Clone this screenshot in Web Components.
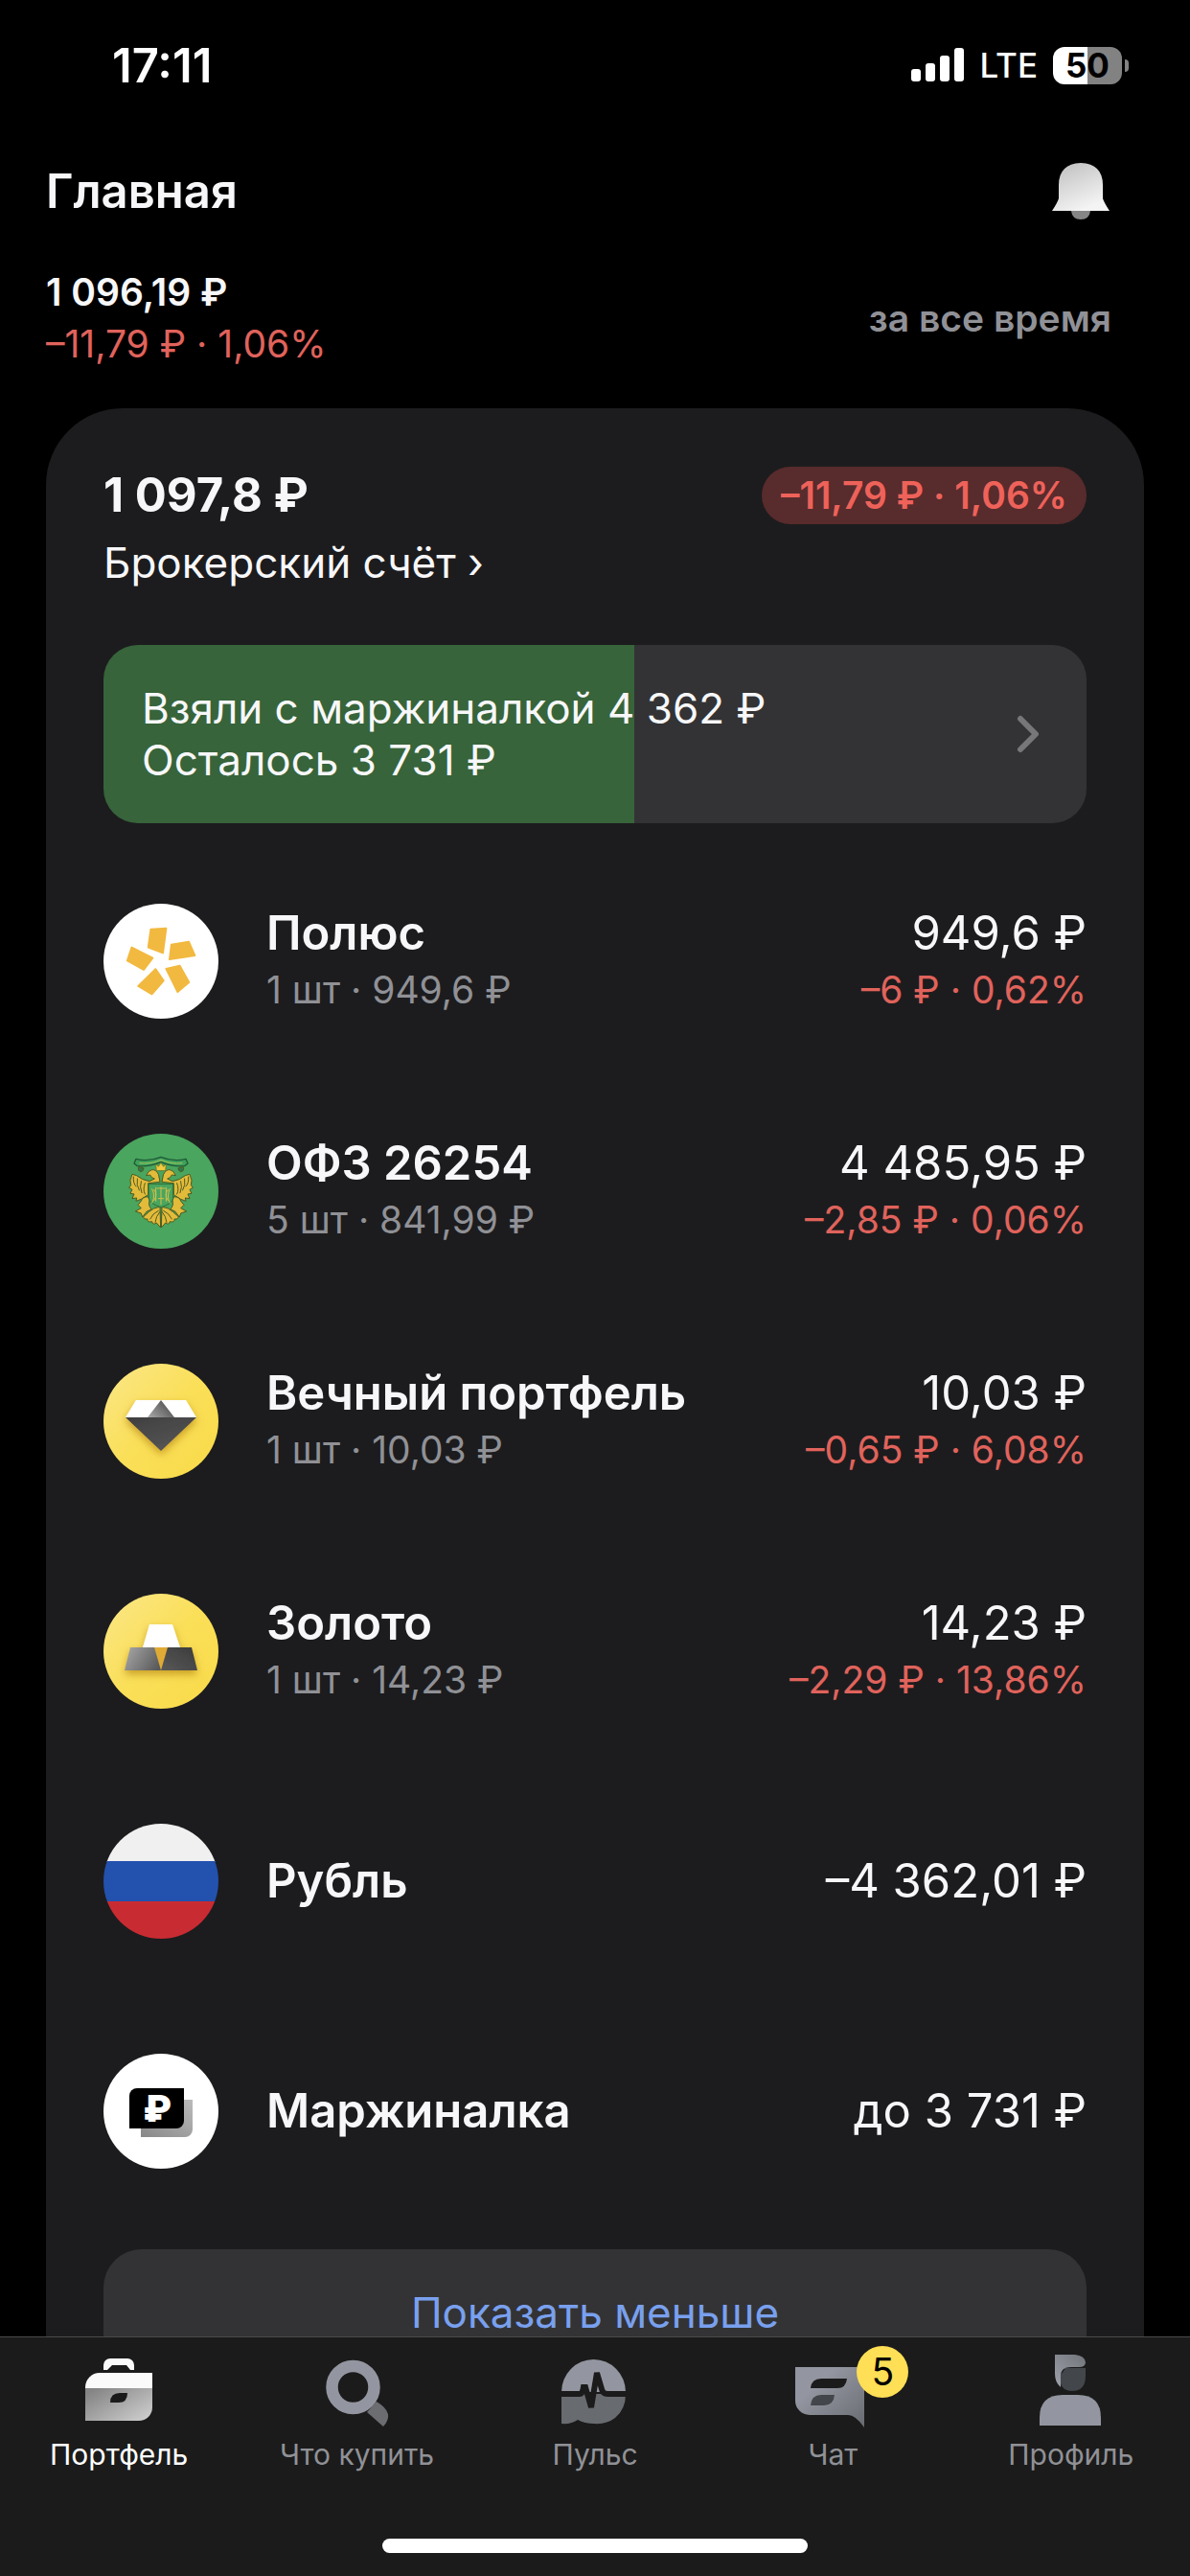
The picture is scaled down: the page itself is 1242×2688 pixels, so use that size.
<!DOCTYPE html>
<html lang="ru">
<head>
<meta charset="utf-8">
<meta name="viewport" content="width=device-width, initial-scale=1">
<title>Портфель</title>
<style>
  :root {
    --bg: #000;
    --bg-card: #1c1c1e;
    --bg-tabbar: #1b1b1b;
    --bg-control: #333335;
    --fg: #f7f7f9;
    --fg-muted: #909196;
    --accent: #79a0ee;
    --loss: #e0635c;
    --loss-bg: #582b2c;
    --margin: #37643a;
    --badge: #ffdf55;
    --text-xl: 49px;
    --text-lg: 44px;
    --text-md: 39px;
    --text-sm: 30px;
  }
  html, body { margin: 0; height: 100%; background: var(--bg); }
  body {
    color: var(--fg);
    font-family: Inter, "Noto Sans", "Liberation Sans", sans-serif;
    -webkit-font-smoothing: antialiased;
  }
</style>
</head>
<body>

<app-shell>
  <status-bar slot="top" time="17:11" network="LTE" battery="50"></status-bar>
  <page-header slot="top" heading="Главная"></page-header>
  <portfolio-summary slot="top" total="1 096,19 ₽" delta="–11,79 ₽ · 1,06%" period="за все время"></portfolio-summary>

  <account-card total="1 097,8 ₽" delta="–11,79 ₽ · 1,06%" name="Брокерский счёт">
    <margin-banner slot="banner" used="Взяли с маржиналкой 4 362 ₽" left="Осталось 3 731 ₽" share="54"></margin-banner>
    <asset-row logo="polus" name="Полюс" detail="1 шт · 949,6 ₽" value="949,6 ₽" delta="–6 ₽ · 0,62%"></asset-row>
    <asset-row logo="ofz" name="ОФЗ 26254" detail="5 шт · 841,99 ₽" value="4 485,95 ₽" delta="–2,85 ₽ · 0,06%"></asset-row>
    <asset-row logo="eternal" name="Вечный портфель" detail="1 шт · 10,03 ₽" value="10,03 ₽" delta="–0,65 ₽ · 6,08%"></asset-row>
    <asset-row logo="gold" name="Золото" detail="1 шт · 14,23 ₽" value="14,23 ₽" delta="–2,29 ₽ · 13,86%"></asset-row>
    <asset-row logo="ruble" name="Рубль" value="–4 362,01 ₽"></asset-row>
    <asset-row logo="margin" name="Маржиналка" value="до 3 731 ₽"></asset-row>
    <span slot="more">Показать меньше</span>
  </account-card>

  <tab-bar slot="bottom">
    <tab-item icon="portfolio" active>Портфель</tab-item>
    <tab-item icon="search">Что купить</tab-item>
    <tab-item icon="pulse">Пульс</tab-item>
    <tab-item icon="chat" badge="5">Чат</tab-item>
    <tab-item icon="profile">Профиль</tab-item>
  </tab-bar>
</app-shell>

<script>
// Round asset logos, 120×120. The clip to a circle is done by asset-row.
const LOGOS = {
  polus: `
    <rect width="120" height="120" fill="#fff"/>
    <g fill="#f2b940" stroke="#f2b940" stroke-width="2" stroke-linejoin="round">
      <path d="M49.4 26.7 65.4 25.7 62 51.3 46.8 45.5Z"/>
      <path d="M70.9 42.7 89 39.7 95.3 54 69 58Z"/>
      <path d="M65.5 68 79.6 64.7 89.2 82 77.4 92Z"/>
      <path d="M54.4 68.3 62.7 80.3 50.5 94.3 36.3 85.9Z"/>
      <path d="M29.5 45.6 51.3 56.6 42 69 24.9 59.3Z"/>
    </g>`,
  ofz: `
    <rect width="120" height="120" fill="#4aa55e"/>
    <g transform="translate(20 17) scale(.3333)" stroke-linecap="round" stroke-linejoin="round">
      <path d="M42 28Q80 38 120 22Q160 38 198 28L204 42 194 50Q160 54 120 38Q80 54 46 50L36 42Z" fill="#3f9f5c" stroke="#1d5a35" stroke-width="4"/>
      <path d="M54 41Q90 44 120 31Q150 44 186 41" fill="none" stroke="#8fc05a" stroke-width="4" stroke-dasharray="4 3"/>
      <g id="half" fill="#e3bb3a" stroke="#4d5a22" stroke-width="3">
        <path d="M50 54Q46 66 58 68 66 66 66 58Z" fill="#2f7a49"/>
        <path d="M112 76Q104 60 92 62 80 64 74 80L86 78Q90 88 100 90L84 98Q60 94 44 80L30 76Q20 96 26 110L20 118 30 124 24 136 36 138 30 152 44 150 42 160 58 154 80 140V104L116 100Z"/>
        <path d="M34 84Q32 104 42 114M46 90Q42 110 52 126M58 98Q52 116 60 134M70 104Q62 124 70 138" fill="none"/>
        <path d="M78 146Q60 148 58 160L48 172 58 182 40 192 58 198 62 210 76 192 90 186Q78 170 84 158Z"/>
        <path d="M116 178Q96 180 82 194L66 208Q64 218 78 216 76 228 92 224 94 236 106 228L118 242Z"/>
        <path d="M112 190Q94 198 86 216M116 194Q104 208 102 226" fill="none"/>
      </g>
      <use href="#half" transform="translate(240 0) scale(-1 1)"/>
      <path d="M106 64 104 44 112 52 120 40 128 52 136 44 134 64Z" fill="#f3c93d" stroke="#6b6b22" stroke-width="2"/>
      <path d="M82 106H158V152Q158 166 120 180 82 166 82 152Z" fill="#4aa55e" stroke="#2d6b35" stroke-width="3"/>
      <path d="M120 116V170M104 118V160M136 118V160M92 122Q104 144 92 166M148 122Q136 144 148 166M98 124Q112 140 98 158M142 124Q128 140 142 158M108 120H132M112 152H128" fill="none" stroke="#d6c04a" stroke-width="3"/>
    </g>`,
  eternal: `
    <defs>
      <linearGradient id="bg" x1="0" y1="0" x2="1" y2="1"><stop stop-color="#fbe789"/><stop offset=".5" stop-color="#fadf58"/><stop offset="1" stop-color="#f9da48"/></linearGradient>
      <linearGradient id="mid" x1="0" y1="1" x2="1" y2=".4"><stop stop-color="#a9a9a9"/><stop offset="1" stop-color="#4f4f4f"/></linearGradient>
      <linearGradient id="low" x1="0" y1="0" x2=".6" y2="1"><stop stop-color="#3f3f3f"/><stop offset="1" stop-color="#555"/></linearGradient>
      <filter id="sh" x="-30%" y="-30%" width="160%" height="170%"><feDropShadow dx="0" dy="4" stdDeviation="4" flood-color="#a06a00" flood-opacity=".55"/></filter>
    </defs>
    <rect width="120" height="120" fill="url(#bg)"/>
    <g filter="url(#sh)">
      <path d="M34 38H86L97 56H23Z" fill="#fff"/>
      <path d="M60 38 74 56H46Z" fill="url(#mid)"/>
      <path d="M23 56H97L60 91Z" fill="url(#low)"/>
    </g>`,
  gold: `
    <defs>
      <linearGradient id="bg" x1="0" y1="0" x2="1" y2="1"><stop stop-color="#fbe789"/><stop offset=".5" stop-color="#fadf58"/><stop offset="1" stop-color="#f9da48"/></linearGradient>
      <linearGradient id="l" x1="0" y1=".3" x2="1" y2=".7"><stop stop-color="#a2a2a2"/><stop offset="1" stop-color="#5a5a5a"/></linearGradient>
      <linearGradient id="r" x1="1" y1="0" x2="0" y2="1"><stop stop-color="#3b3b3b"/><stop offset="1" stop-color="#585858"/></linearGradient>
      <filter id="sh" x="-30%" y="-30%" width="160%" height="170%"><feDropShadow dx="0" dy="4" stdDeviation="4" flood-color="#a06a00" flood-opacity=".55"/></filter>
    </defs>
    <rect width="120" height="120" fill="url(#bg)"/>
    <g filter="url(#sh)">
      <path d="M53 56H67L60 80Z" fill="#e0ab35"/>
      <path d="M48 32H72L80 56H41Z" fill="#fff"/>
      <path d="M28 56H53L60 80H22Z" fill="url(#l)"/>
      <path d="M67 56H92L98 80H60Z" fill="url(#r)"/>
    </g>`,
  ruble: `
    <rect width="120" height="40" fill="#f0f0f0"/>
    <rect y="39" width="120" height="42" fill="#2351ae"/>
    <rect y="81" width="120" height="39" fill="#c92b32"/>`,
  margin: `
    <defs><linearGradient id="g" x1="0" y1="1" x2="1" y2="0"><stop stop-color="#888"/><stop offset="1" stop-color="#bbb"/></linearGradient></defs>
    <rect width="120" height="120" fill="#fff"/>
    <path d="M39 48H93V79A8 8 0 0 1 85 87H39Z" fill="url(#g)"/>
    <path d="M35 36H84V70A8 8 0 0 1 76 78H27V44A8 8 0 0 1 35 36Z"/>
    <text x="56" y="71" text-anchor="middle" font-size="38" font-weight="900" fill="#fff">₽</text>`,
};

// Tab icons, 84×84.
const ICONS = {
  portfolio: `
    <defs><linearGradient id="g" x1="0" y1=".2" x2="1" y2="1"><stop stop-color="#858585"/><stop offset="1" stop-color="#d2d2d2"/></linearGradient></defs>
    <path d="M26 23V18A7 7 0 0 1 33 11H51A7 7 0 0 1 58 18V23H54L50 18H35L30 23Z" fill="#fafafa"/>
    <path d="M7 42V41A15 15 0 0 1 22 26H77V42Z" fill="#fafafa"/>
    <path d="M7 42H77V62A14 14 0 0 1 63 76H7Z" fill="url(#g)"/>
    <path d="M33 57Q33 47 43 47H51Q51 57 42 57Z" fill="#1b1b1b"/>`,
  search: `
    <path d="M52 67 62 56Q82 68 69 82Z" fill="#6b6d71"/>
    <circle cx="37.5" cy="41" r="22" fill="none" stroke="#9396a0" stroke-width="12.5"/>`,
  pulse: `
    <path d="M7 46A33.5 34 0 0 1 74 46Z" fill="#9396a0"/>
    <path d="M7 48H74Q74 64 63 73 54 80 41 79 31 79 24 75 17 80 7 79Z" fill="#686b6f"/>
    <path d="M6 48H26Q29 48 30 41H32L38 62 44 26 49 43Q50 48 55 48H76" fill="none" stroke="#1b1b1b" stroke-width="6"/>`,
  chat: `
    <defs><linearGradient id="g" x1="0" y1="0" x2="1" y2="1"><stop offset=".3" stop-color="#9396a0"/><stop offset="1" stop-color="#686b70"/></linearGradient></defs>
    <path d="M3 20H67A8 8 0 0 1 75 28V83Q66 70 58 70H18A15 15 0 0 1 3 55Z" fill="url(#g)"/>
    <path d="M19 42Q20 32 30 32H57Q56 42 47 42Z" fill="#1b1b1b"/>
    <path d="M19 60Q20 49 30 49H44Q43 60 33 60Z" fill="#43464a"/>`,
  profile: `
    <defs><linearGradient id="g" x1="0" y1="1" x2=".8" y2="0"><stop stop-color="#9fa2ac"/><stop offset="1" stop-color="#75787e"/></linearGradient></defs>
    <path d="M36 21H57V29Q57 45 43 45 30 45 30 30Z" fill="#43464a"/>
    <path d="M25 7H46Q56 8 57 15 57 20 50 20H42Q31 20 31 29V41Q25 36 25 27Z" fill="url(#g)"/>
    <path d="M9 81V73Q9 49 33 49H49Q73 49 73 73V81Z" fill="#9396a0"/>`,
};

const attr = (el, name) => el.getAttribute(name) ?? "";

class BaseElement extends HTMLElement {
  constructor() {
    super();
    this.attachShadow({ mode: "open" });
  }
  connectedCallback() {
    this.shadowRoot.innerHTML = `<style>${this.constructor.css}</style>${this.render()}`;
  }
}

// Full-height frame: fixed top, clipped scroll area, bottom bar.
class AppShell extends BaseElement {
  static css = `
    :host { display: flex; flex-direction: column; height: 100vh; }
    header, footer { flex: none; }
    main { flex: 1; min-height: 0; overflow: hidden; padding: 40px 48px 0; }
  `;
  render() {
    return `<header><slot name="top"></slot></header>
      <main><slot></slot></main>
      <footer><slot name="bottom"></slot></footer>`;
  }
}

class StatusBar extends BaseElement {
  static css = `
    :host {
      display: flex;
      align-items: center;
      justify-content: space-between;
      height: 136px;
      padding: 0 64px 0 117px;
      color: #fff;
    }
    time { font-size: var(--text-xl); font-weight: 600; }
    .right { display: flex; align-items: center; gap: 16px; }
    .signal { display: block; width: 56px; height: 36px; }
    .net { font-size: 35px; font-weight: 500; }
    .battery { display: flex; align-items: center; gap: 3px; }
    .cell {
      width: 72px;
      border-radius: 12px;
      background: linear-gradient(90deg, #fff var(--level), #828282 var(--level));
      color: #000;
      font-size: 35px;
      font-weight: 700;
      line-height: 39px;
      text-align: center;
    }
    .tip { width: 4px; height: 13px; border-radius: 0 4px 4px 0; background: #828282; }
  `;
  render() {
    const level = attr(this, "battery");
    return `<time>${attr(this, "time")}</time>
      <div class="right">
        <svg class="signal" viewBox="0 0 56 36" fill="#fff">
          <rect y="22" width="10" height="13" rx="3"/><rect x="15" y="16" width="10" height="19" rx="3"/>
          <rect x="30" y="8" width="10" height="27" rx="3"/><rect x="45" width="10" height="35" rx="3"/>
        </svg>
        <span class="net">${attr(this, "network")}</span>
        <div class="battery" style="--level: ${level}%">
          <span class="cell">${level}</span><span class="tip"></span>
        </div>
      </div>`;
  }
}

class PageHeader extends BaseElement {
  static css = `
    :host {
      display: flex;
      align-items: center;
      justify-content: space-between;
      height: 126px;
      padding: 0 72px 0 48px;
    }
    h1 { margin: 0; font-size: var(--text-xl); font-weight: 600; }
    button { padding: 0; border: 0; background: none; }
    svg { display: block; width: 84px; height: 84px; }
  `;
  render() {
    return `<h1>${attr(this, "heading")}</h1>
      <button type="button" aria-label="Уведомления">
        <svg viewBox="0 0 84 84">
          <defs><linearGradient id="g" x1="0" y1="0" x2=".5" y2="1"><stop stop-color="#bdbdbe"/><stop offset="1" stop-color="#f4f4f5"/></linearGradient></defs>
          <path d="M32 60H52V63Q51 72 42 72 33 72 32 63Z" fill="#868686"/>
          <path d="M42 13Q65 14 65 36V50Q66 54 72 63H12Q18 54 19 50V36Q19 14 42 13Z" fill="url(#g)"/>
        </svg>
      </button>`;
  }
}

class PortfolioSummary extends BaseElement {
  static css = `
    :host {
      display: flex;
      align-items: center;
      justify-content: space-between;
      padding: 16px 82px 0 48px;
      font-size: var(--text-md);
      line-height: 54px;
    }
    .total { font-weight: 600; }
    .delta { color: var(--loss); }
    button {
      padding: 0;
      border: 0;
      background: none;
      color: var(--fg-muted);
      font: inherit;
      font-weight: 600;
    }
  `;
  render() {
    return `<div>
        <div class="total">${attr(this, "total")}</div>
        <div class="delta">${attr(this, "delta")}</div>
      </div>
      <button type="button">${attr(this, "period")}</button>`;
  }
}

class AccountCard extends BaseElement {
  static css = `
    :host {
      display: block;
      padding: 61px 60px;
      border-radius: 80px;
      background: var(--bg-card);
    }
    .head { display: flex; align-items: center; justify-content: space-between; }
    .total { font-size: var(--text-xl); font-weight: 700; line-height: 60px; }
    .pill {
      padding: 0 20px;
      border-radius: 30px;
      background: var(--loss-bg);
      color: #ee625a;
      font-size: var(--text-md);
      font-weight: 600;
      line-height: 60px;
    }
    a {
      display: inline-block;
      margin: 13px 0 59px;
      color: inherit;
      font-size: var(--text-lg);
      line-height: 54px;
      text-decoration: none;
    }
    .assets { display: grid; gap: 120px; margin: 84px 0; }
    button {
      display: block;
      width: 100%;
      height: 132px;
      border: 0;
      border-radius: 40px;
      background: var(--bg-control);
      color: var(--accent);
      font: inherit;
      font-size: var(--text-lg);
    }
  `;
  render() {
    return `<div class="head">
        <span class="total">${attr(this, "total")}</span>
        <span class="pill">${attr(this, "delta")}</span>
      </div>
      <a href="#account">${attr(this, "name")} ›</a>
      <slot name="banner"></slot>
      <div class="assets"><slot></slot></div>
      <button type="button"><slot name="more"></slot></button>`;
  }
}

class MarginBanner extends BaseElement {
  static css = `
    :host { display: block; }
    a {
      display: flex;
      align-items: center;
      justify-content: space-between;
      padding: 39px 46px 39px 40px;
      border-radius: 36px;
      background: linear-gradient(90deg, var(--margin) var(--share), var(--bg-control) var(--share));
      color: inherit;
      font-size: var(--text-lg);
      line-height: 54px;
      text-decoration: none;
    }
    span { display: block; }
    svg { display: block; width: 32px; height: 42px; }
  `;
  render() {
    return `<a href="#margin" style="--share: ${attr(this, "share")}%">
        <div><span>${attr(this, "used")}</span><span>${attr(this, "left")}</span></div>
        <svg viewBox="0 0 32 42"><path d="M9 5 25 21 9 37" fill="none" stroke="#77777a" stroke-width="6" stroke-linecap="round" stroke-linejoin="round"/></svg>
      </a>`;
  }
}

class AssetRow extends BaseElement {
  static css = `
    :host { display: block; }
    a {
      display: flex;
      align-items: center;
      gap: 50px;
      height: 120px;
      color: inherit;
      text-decoration: none;
    }
    svg { flex: none; display: block; width: 120px; height: 120px; border-radius: 50%; }
    .text { flex: 1; min-width: 0; }
    .side { flex: none; text-align: right; }
    .name, .value { font-size: var(--text-xl); line-height: 60px; }
    .name { font-weight: 600; }
    .detail, .delta { font-size: var(--text-md); line-height: 58px; }
    .detail { color: var(--fg-muted); }
    .delta { color: var(--loss); }
  `;
  render() {
    const line = (name) => this.hasAttribute(name) ? `<div class="${name}">${attr(this, name)}</div>` : "";
    return `<a href="#${attr(this, "logo")}">
        <svg viewBox="0 0 120 120" aria-hidden="true">${LOGOS[attr(this, "logo")]}</svg>
        <div class="text">${line("name")}${line("detail")}</div>
        <div class="side">${line("value")}${line("delta")}</div>
      </a>`;
  }
}

class TabBar extends BaseElement {
  static css = `
    :host {
      display: flex;
      flex-direction: column;
      justify-content: space-between;
      height: 250px;
      box-sizing: border-box;
      padding: 11px 0 24px;
      border-top: 1px solid #4a4a4b;
      background: var(--bg-tabbar);
    }
    nav { display: grid; grid-auto-flow: column; grid-auto-columns: 1fr; }
    .home { align-self: center; width: 444px; height: 15px; border-radius: 8px; background: #fff; }
  `;
  render() {
    return `<nav><slot></slot></nav><div class="home"></div>`;
  }
}

class TabItem extends BaseElement {
  static css = `
    :host { display: block; color: var(--fg-muted); }
    :host([active]) { color: #fff; }
    a {
      display: flex;
      flex-direction: column;
      align-items: center;
      gap: 7px;
      color: inherit;
      font-size: var(--text-sm);
      line-height: 40px;
      text-decoration: none;
      white-space: nowrap;
    }
    .icon { position: relative; }
    svg { display: block; width: 84px; height: 84px; }
    .badge {
      position: absolute;
      top: -2px;
      left: 67px;
      width: 54px;
      border-radius: 50%;
      background: var(--badge);
      color: #000;
      font-size: var(--text-md);
      line-height: 54px;
      text-align: center;
    }
  `;
  render() {
    const badge = this.hasAttribute("badge") ? `<span class="badge">${attr(this, "badge")}</span>` : "";
    return `<a href="#${attr(this, "icon")}">
        <span class="icon"><svg viewBox="0 0 84 84" aria-hidden="true">${ICONS[attr(this, "icon")]}</svg>${badge}</span>
        <slot></slot>
      </a>`;
  }
}

customElements.define("app-shell", AppShell);
customElements.define("status-bar", StatusBar);
customElements.define("page-header", PageHeader);
customElements.define("portfolio-summary", PortfolioSummary);
customElements.define("account-card", AccountCard);
customElements.define("margin-banner", MarginBanner);
customElements.define("asset-row", AssetRow);
customElements.define("tab-bar", TabBar);
customElements.define("tab-item", TabItem);
</script>
</body>
</html>
